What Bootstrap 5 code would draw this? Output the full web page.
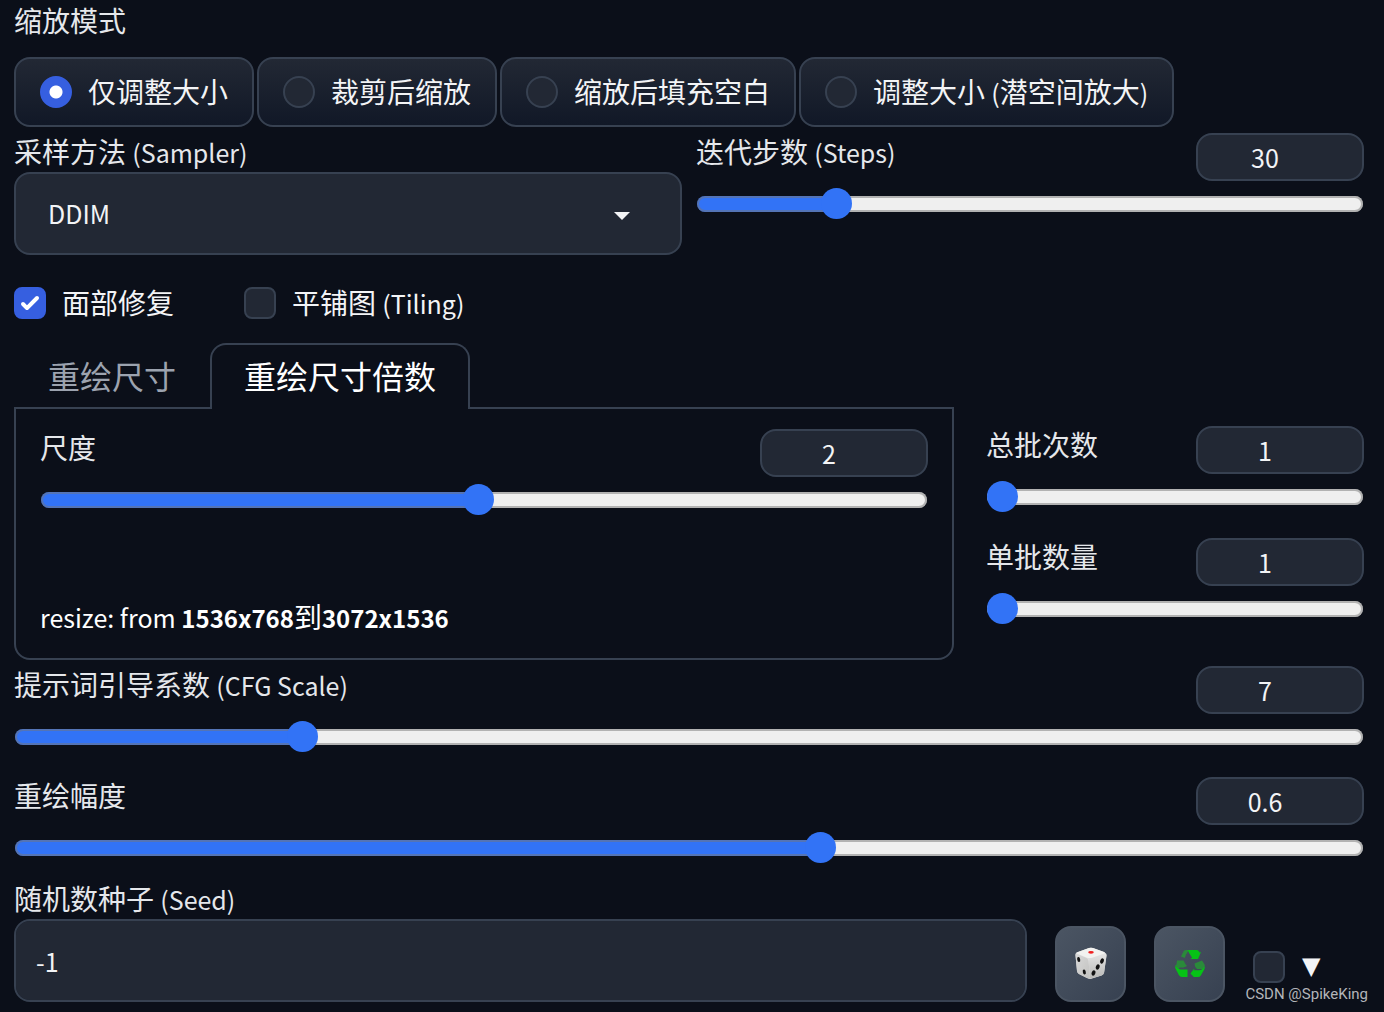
<!DOCTYPE html>
<html lang="zh-CN">
<head>
<meta charset="utf-8">
<meta name="viewport" content="width=device-width, initial-scale=1">
<title>图生图参数</title>
<link href="https://cdn.jsdelivr.net/npm/bootstrap@5.3.0/dist/css/bootstrap.min.css" rel="stylesheet">
<style>
  :root { --edge: #374151; --accent: #3273f6; }
  body { background: #0b0f19; color: #f3f4f6; font-family: "Noto Sans CJK SC", sans-serif; font-size: 28px; line-height: 40px; }
  .settings { padding: 0 20px 10px 14px; }
  .cap { height: 39px; color: #e5e7eb; font-size: 28px; line-height: 36px; white-space: nowrap; }
  .title.cap { margin-bottom: 18px; line-height: 40px; }
  .latin { font-size: 25px; }
  .modes { gap: 3px; }
  .pill { height: 70px; padding: 0 24px; border: 2px solid var(--edge); border-radius: 16px; background: linear-gradient(to bottom, #222834, #111827); white-space: nowrap; cursor: pointer; }
  .txt { padding-bottom: 2px; }
  .tick.form-check-input { width: 32px; height: 32px; margin: 0; border: 2px solid var(--edge); background-color: #222834; flex: none; }
  .tick.form-check-input[type=checkbox] { border-radius: 8px; }
  .tick.form-check-input:checked { background-color: #365fe0; border-color: #365fe0; }
  .tick.form-check-input:checked[type=radio] { background-image: radial-gradient(circle, #fff 6px, transparent 7px); }
  .tick.form-check-input:checked[type=checkbox] { background-image: url("data:image/svg+xml,%3csvg viewBox='0 0 16 16' fill='white' xmlns='http://www.w3.org/2000/svg'%3e%3cpath d='M12.207 4.793a1 1 0 010 1.414l-5 5a1 1 0 01-1.414 0l-2-2a1 1 0 011.414-1.414L6.5 9.086l4.293-4.293a1 1 0 011.414 0z'/%3e%3c/svg%3e"); background-size: 32px 32px; }
  .field, .field:focus { height: 83px; border: 2px solid var(--edge); border-radius: 16px; background-color: #222834; color: #f3f4f6; font-size: 25px; }
  .field.form-select { padding: 0 32px; background-image: url("data:image/svg+xml,%3csvg viewBox='0 0 16 8' fill='%23f3f4f6' xmlns='http://www.w3.org/2000/svg'%3e%3cpath d='M0 0h16L8 8z'/%3e%3c/svg%3e"); background-size: 16px 8px; background-position: right 50px top 38px; }
  .field.form-control { padding: 0 20px; }
  .num.form-control { width: 168px; height: 48px; padding: 0 30px 0 0; border: 2px solid var(--edge); border-radius: 16px; background: #222834; color: #f3f4f6; font-size: 25px; line-height: 40px; text-align: center; flex: none; }
  .slide { -webkit-appearance: none; appearance: none; display: block; width: 100%; height: 32px; margin: 7px 0 0; padding: 0 1px; background: transparent; }
  .slide::-webkit-slider-runnable-track { height: 16px; border-radius: 8px; background: linear-gradient(to right, var(--accent) var(--at), #efefef var(--at)); box-shadow: inset 0 0 0 2px rgba(118, 118, 118, .5); }
  .slide::-webkit-slider-thumb { -webkit-appearance: none; width: 31px; height: 31px; margin-top: -8px; border: 0; border-radius: 50%; background: var(--accent); }
  .sampling { display: grid; grid-template-columns: 1fr 1fr; gap: 14px; margin-top: 6px; }
  .options { height: 40px; margin-top: 28px; gap: 70px; }
  .sizing { display: grid; grid-template-columns: 940fr 378fr; gap: 32px; margin-top: 20px; }
  .tabs.nav { margin-bottom: -2px; border: 0; }
  .tabs .nav-link { height: 66px; padding: 0 32px 4px; border: 2px solid transparent; border-bottom: 0; border-radius: 16px 16px 0 0; font-size: 32px; line-height: 60px; color: #9ca3af; }
  .tabs .nav-link.active { position: relative; margin: 0; color: #fff; background: #0b0f19; border-color: var(--edge); }
  .pane { height: 253px; padding: 20px 24px; border: 2px solid var(--edge); border-radius: 0 0 16px 16px; }
  .outcome strong { font-size: 24px; }
  .batch { padding-top: 83px; gap: 25px; }
  .stack { margin-top: 6px; gap: 24px; }
  .seedcap { margin-top: 16px; }
  .seed { gap: 28px; }
  .tool.btn { width: 71px; height: 76px; padding: 0 0 2px; border: 2px solid #4b5563; border-radius: 16px; background: linear-gradient(to bottom right, #4b5563, #374151); flex: none; }
  .tool svg { display: block; margin: 0 auto; }
  .extra { width: 111px; height: 70px; gap: 17px; flex: none; }
  .arrow { padding-bottom: 3px; font-family: "DejaVu Sans", sans-serif; font-size: 24px; line-height: 32px; }
  .credit { position: absolute; right: 16px; bottom: 8px; color: #b3b5b9; font-family: Roboto, sans-serif; font-size: 15px; line-height: 20px; }
</style>
</head>
<body>
<main class="settings position-relative">
  <fieldset>
    <legend class="cap title float-none">缩放模式</legend>
    <div class="modes d-flex">
      <label class="pill d-flex align-items-center gap-3"><input class="tick form-check-input" type="radio" name="mode" checked><span class="txt">仅调整大小</span></label>
      <label class="pill d-flex align-items-center gap-3"><input class="tick form-check-input" type="radio" name="mode"><span class="txt">裁剪后缩放</span></label>
      <label class="pill d-flex align-items-center gap-3"><input class="tick form-check-input" type="radio" name="mode"><span class="txt">缩放后填充空白</span></label>
      <label class="pill d-flex align-items-center gap-3"><input class="tick form-check-input" type="radio" name="mode"><span class="txt">调整大小 <span class="latin">(</span>潜空间放大<span class="latin">)</span></span></label>
    </div>
  </fieldset>

  <div class="sampling">
    <div>
      <label class="cap d-block" for="sampler">采样方法 <span class="latin">(Sampler)</span></label>
      <select class="field form-select" id="sampler"><option>DDIM</option></select>
    </div>
    <div>
      <div class="d-flex justify-content-between">
        <label class="cap" for="steps">迭代步数 <span class="latin">(Steps)</span></label>
        <input class="num form-control" type="text" value="30" aria-label="迭代步数">
      </div>
      <input class="slide" id="steps" type="range" min="1" max="150" value="30" style="--at:20%">
    </div>
  </div>

  <div class="options d-flex">
    <label class="d-flex align-items-center gap-3"><input class="tick form-check-input" type="checkbox" checked><span class="txt">面部修复</span></label>
    <label class="d-flex align-items-center gap-3"><input class="tick form-check-input" type="checkbox"><span class="txt">平铺图 <span class="latin">(Tiling)</span></span></label>
  </div>

  <div class="sizing">
    <section>
      <div class="tabs nav nav-tabs" role="tablist">
        <button class="nav-link" type="button" role="tab">重绘尺寸</button>
        <button class="nav-link active" type="button" role="tab" aria-selected="true">重绘尺寸倍数</button>
      </div>
      <div class="pane d-flex flex-column justify-content-between" role="tabpanel">
        <div>
          <div class="d-flex justify-content-between">
            <label class="cap" for="scale">尺度</label>
            <input class="num form-control" type="text" value="2" aria-label="尺度">
          </div>
          <input class="slide" id="scale" type="range" min="0.05" max="4" step="0.05" value="2" style="--at:49%">
        </div>
        <div class="outcome text-white"><span class="latin">resize: from </span><strong>1536x768</strong>到<strong>3072x1536</strong></div>
      </div>
    </section>
    <section class="batch d-flex flex-column">
      <div>
        <div class="d-flex justify-content-between">
          <label class="cap" for="count">总批次数</label>
          <input class="num form-control" type="text" value="1" aria-label="总批次数">
        </div>
        <input class="slide" id="count" type="range" min="1" max="100" value="1" style="--at:0%">
      </div>
      <div>
        <div class="d-flex justify-content-between">
          <label class="cap" for="size">单批数量</label>
          <input class="num form-control" type="text" value="1" aria-label="单批数量">
        </div>
        <input class="slide" id="size" type="range" min="1" max="8" value="1" style="--at:0%">
      </div>
    </section>
  </div>

  <div class="stack d-flex flex-column">
    <div>
      <div class="d-flex justify-content-between">
        <label class="cap" for="cfg">提示词引导系数 <span class="latin">(CFG Scale)</span></label>
        <input class="num form-control" type="text" value="7" aria-label="提示词引导系数">
      </div>
      <input class="slide" id="cfg" type="range" min="1" max="30" step="0.5" value="7" style="--at:21%">
    </div>
    <div>
      <div class="d-flex justify-content-between">
        <label class="cap" for="denoise">重绘幅度</label>
        <input class="num form-control" type="text" value="0.6" aria-label="重绘幅度">
      </div>
      <input class="slide" id="denoise" type="range" min="0" max="1" step="0.01" value="0.6" style="--at:60%">
    </div>
  </div>

  <label class="cap seedcap d-block" for="seed">随机数种子 <span class="latin">(Seed)</span></label>
  <div class="seed d-flex align-items-end">
    <input class="field form-control" id="seed" type="text" value="-1">
    <button class="tool btn" type="button" aria-label="随机种子">
      <svg width="32" height="32" viewBox="0 0 32 32">
        <defs>
          <linearGradient id="dl" x1="0" y1="0" x2="1" y2="1"><stop offset="0" stop-color="#d9d9d9"/><stop offset="1" stop-color="#c2c2c0"/></linearGradient>
          <linearGradient id="dr" x1="0" y1="0" x2="0" y2="1"><stop offset="0" stop-color="#e4e4e4"/><stop offset="1" stop-color="#b9b9b7"/></linearGradient>
        </defs>
        <path d="M3 5Q.5 5 .5 8L2 24Q2.300 26 4 27l8 4q2 .9 3.500.9l11-3.400q2.300-.9 2.600-3L31.500 8.500Q31.500 6 29 5L18 1Q16 .4 14 .9Z" fill="#dedede"/>
        <path d="M1 6.500 11.500 11Q13.500 12 13.600 14.500L15 31.800q-1.500-.1-3-.8L4 27q-1.700-1-2-3L.5 8.500Q.4 7 1 6.500Z" fill="url(#dl)"/>
        <path d="M31 6.500 17 10.800q-3.300 1-3.300 3.700L15 31.800l11.500-3.300q2.300-.9 2.600-3L31.500 8.500q0-1.300-.5-2Z" fill="url(#dr)"/>
        <path d="M3 5 14 .9q2-.5 4 0L29 5q2 .8 0 1.800L17 10.700q-2.500.7-5 0L3 7Q.8 6 3 5Z" fill="#f2f2f0"/>
        <ellipse cx="16" cy="5.300" rx="2.800" ry="1.400" fill="#ef2020"/>
        <g fill="#111"><ellipse cx="3.700" cy="12.500" rx="1.500" ry="2.500" transform="rotate(-12 3.700 12.500)"/><ellipse cx="9.300" cy="25" rx="1.500" ry="2.600" transform="rotate(-12 9.300 25)"/><ellipse cx="27" cy="14" rx="1.800" ry="2.700" transform="rotate(25 27 14)"/><ellipse cx="22.700" cy="20" rx="1.900" ry="2.700" transform="rotate(25 22.700 20)"/><ellipse cx="18.500" cy="26" rx="1.900" ry="2.700" transform="rotate(25 18.500 26)"/></g>
      </svg>
    </button>
    <button class="tool btn" type="button" aria-label="重用种子">
      <svg width="30" height="27" viewBox="0 0 30 27">
        <g fill="#2a8a3a">
          <path d="M9 .5Q10 0 11 0h3.500Q12.500 1.500 11 4.500L9.800 8 6 6.500Z"/>
          <path d="M2 10.500h6.500L11 15l1.200 1-3.700 1.500H4.500L3 19.500 0 15.500l1.500-1Z"/>
          <path d="m19.500 13.500 7.500-3 2.500 4q.8 2-.5 3.500l-1.500 1H22l-2-2.500Z"/>
        </g>
        <g fill="#06c216">
          <path d="M13 0h8.500q1.500 0 2.300 1.200l.9 1.300L26 2l-3 7h-7.500l1.600-1.200-3-4.800Q13 1.200 13 0Z"/>
          <path d="M.3 16 3.500 18.700q1 .8 2.500.8h6.500V27H7q-2 0-3-1.700L.7 19q-.8-1.500-.4-3Z"/>
          <path d="m15.500 23.500 3.700-5v1.800H24q2.500 0 4-1.800l1.500-2q.5 1.200-.2 2.700l-3.500 6.300Q24.800 27 23 27h-3.500l-.3.500Z"/>
        </g>
      </svg>
    </button>
    <label class="extra d-flex align-items-center"><input class="tick form-check-input" type="checkbox"><span class="arrow">▼</span></label>
  </div>
  <div class="credit">CSDN @SpikeKing</div>
</main>
<script src="https://cdn.jsdelivr.net/npm/bootstrap@5.3.0/dist/js/bootstrap.bundle.min.js"></script>
</body>
</html>
